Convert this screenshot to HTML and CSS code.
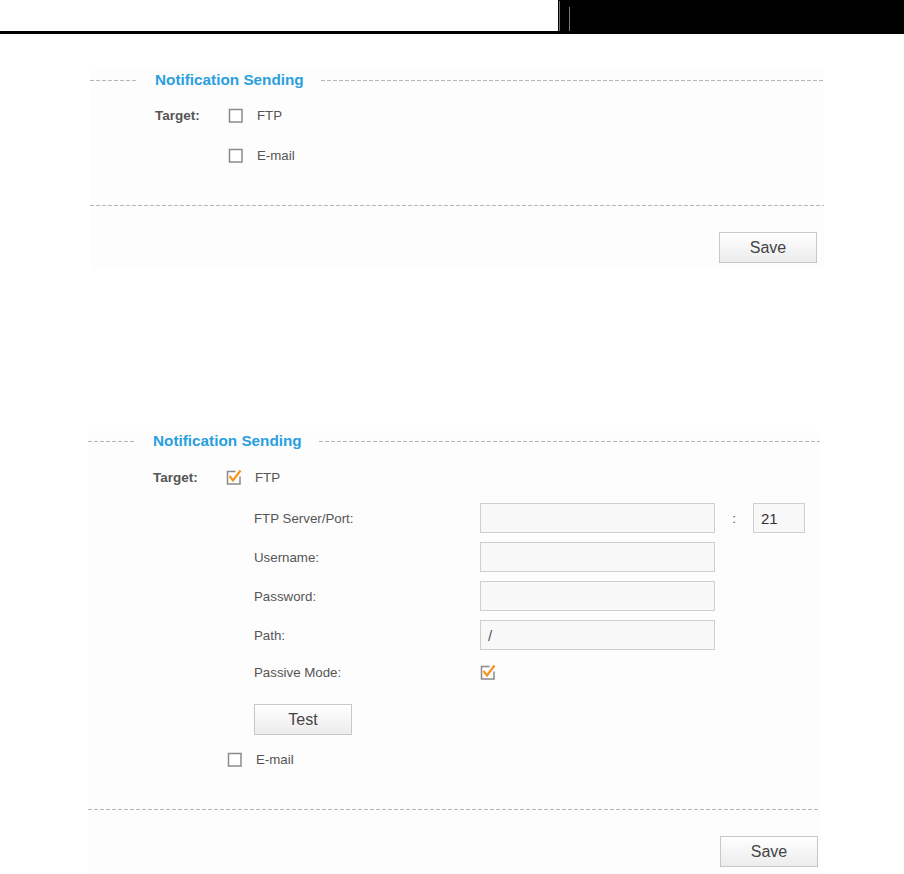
FILE: index.html
```html
<!DOCTYPE html>
<html>
<head>
<meta charset="utf-8">
<link rel="stylesheet" href="styles.css">
</head>
<body>
<div class="topbar">
  <div class="top-left"></div>
  <div class="top-right"><span class="vl vl1"></span><span class="vl vl2"></span></div>
</div>

<section class="panel p1">
  <div class="legend"><span class="dash dl"></span><span class="title">Notification Sending</span><span class="dash dr"></span></div>
  <div class="row target">
    <span class="lbl-b">Target:</span>
    <span class="cb"><svg width="16" height="16" viewBox="0 0 16 16"><rect x="1.5" y="2.5" width="12.5" height="12.5" fill="#fff" stroke="#8a8a8a" stroke-width="1.5"/></svg></span>
    <span class="opt">FTP</span>
  </div>
  <div class="row sub">
    <span class="cb"><svg width="16" height="16" viewBox="0 0 16 16"><rect x="1.5" y="2.5" width="12.5" height="12.5" fill="#fff" stroke="#8a8a8a" stroke-width="1.5"/></svg></span>
    <span class="opt">E-mail</span>
  </div>
  <div class="sep"></div>
  <div class="actions"><button class="btn">Save</button></div>
</section>

<section class="panel p2">
  <div class="legend"><span class="dash dl"></span><span class="title">Notification Sending</span><span class="dash dr"></span></div>
  <div class="row target">
    <span class="lbl-b">Target:</span>
    <span class="cb"><svg width="16" height="16" viewBox="0 0 16 16"><path d="M9.5 2.5H1.5V15H14V7.5" fill="none" stroke="#8a8a8a" stroke-width="1.5"/><path d="M3.5 7L7 11.5L14.5 1.5" fill="none" stroke="#f5941e" stroke-width="2.2"/></svg></span>
    <span class="opt">FTP</span>
  </div>
  <div class="form">
    <div class="frow"><span class="flbl">FTP Server/Port:</span><span class="inp"></span><span class="colon">:</span><span class="inp port">21</span></div>
    <div class="frow"><span class="flbl">Username:</span><span class="inp"></span></div>
    <div class="frow"><span class="flbl">Password:</span><span class="inp"></span></div>
    <div class="frow"><span class="flbl">Path:</span><span class="inp">/</span></div>
    <div class="frow passive"><span class="flbl">Passive Mode:</span><span class="cb"><svg width="16" height="16" viewBox="0 0 16 16"><path d="M9.5 2.5H1.5V15H14V7.5" fill="none" stroke="#8a8a8a" stroke-width="1.5"/><path d="M3.5 7L7 11.5L14.5 1.5" fill="none" stroke="#f5941e" stroke-width="2.2"/></svg></span></div>
    <div class="test"><button class="btn">Test</button></div>
  </div>
  <div class="row sub email2">
    <span class="cb"><svg width="16" height="16" viewBox="0 0 16 16"><rect x="1.5" y="2.5" width="12.5" height="12.5" fill="#fff" stroke="#8a8a8a" stroke-width="1.5"/></svg></span>
    <span class="opt">E-mail</span>
  </div>
  <div class="sep"></div>
  <div class="actions"><button class="btn">Save</button></div>
</section>
</body>
</html>
```
FILE: styles.css
```css
html, body { margin: 0; padding: 0; background: #fff; }
body { font-family: "Liberation Sans", Arial, sans-serif; font-size: 13.3px; color: #555; }

.topbar { display: flex; height: 31px; border-bottom: 3px solid #000; }
.top-left { width: 558px; background: #fff; }
.top-right { flex: 1; background: #000; position: relative; }
.vl { position: absolute; width: 1px; background: #777; bottom: 0; }
.vl1 { left: 1px; top: 1px; }
.vl2 { left: 11px; top: 7px; }

.panel { background: #fdfdfd; }
.p1 { margin: 36px 0 0 90px; width: 734px; }
.p2 { margin: 161px 0 0 88px; width: 732px; }

.legend { display: flex; align-items: center; height: 20px; }
.dash { height: 1px; background: repeating-linear-gradient(to right, #b5b5b5 0 4px, transparent 4px 6px); }
.dl { width: 47px; }
.dr { flex: 1; }
.title { font-size: 15.3px; font-weight: bold; color: #2a9fdd; padding: 0 17px 0 18px; line-height: 20px; }

.row { display: flex; align-items: center; height: 20px; }
.target { margin-top: 15px; padding-left: 65px; }
.p2 .target { margin-top: 16px; padding-left: 65px; }
.lbl-b { font-weight: bold; font-size: 13.5px; width: 73px; }
.cb { width: 16px; height: 16px; display: inline-flex; }
.cb svg { display: block; }
.opt { margin-left: 13px; }
.sub { margin-top: 20px; padding-left: 138px; }

.sep { height: 1px; margin-top: 40px; background: repeating-linear-gradient(to right, #b5b5b5 0 4px, transparent 4px 6px); }
.actions { display: flex; justify-content: flex-end; padding: 26px 7px 7px 0; }
.p2 .actions { padding-right: 2px; }

.btn { width: 98px; height: 31px; border: 1px solid #c8c8c8; background: linear-gradient(#ffffff, #ececec); font-family: "Liberation Sans", Arial, sans-serif; font-size: 16px; color: #444; padding: 0; }

.form { padding-left: 166px; margin-top: 16px; }
.frow { display: flex; align-items: center; height: 30px; margin-bottom: 9px; }
.flbl { width: 226px; }
.inp { box-sizing: border-box; width: 235px; height: 30px; border: 1px solid #cfcfcf; background: #f8f8f8; display: flex; align-items: center; padding-left: 7px; font-size: 15px; color: #555; }
.colon { width: 38px; text-align: center; }
.port { width: 52px; color: #333; }
.passive { height: 26px; margin-bottom: 0; }
.test { margin-top: 19px; }
.email2 { margin-top: 14px; padding-left: 139px; }
```
